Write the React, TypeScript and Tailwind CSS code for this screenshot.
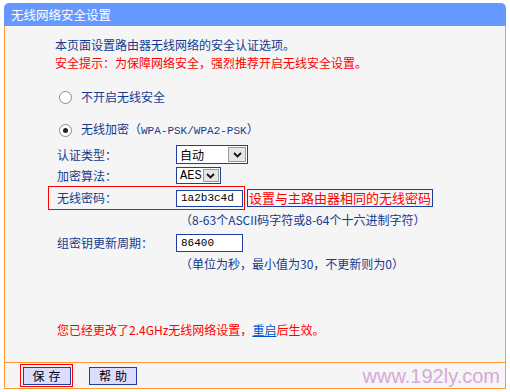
import React from 'react';

const FONT = { fontFamily: '"Noto Sans CJK SC", "Liberation Sans", sans-serif' };
const MONO = { fontFamily: '"Liberation Mono", "Noto Sans CJK SC", monospace' };

const Radio = ({ checked, label }: { checked?: boolean; label: React.ReactNode }) => (
  <div className="flex items-center h-[18px] pl-[54px]">
    <span className="w-[13px] h-[13px] rounded-full border border-[#8a8a8a] bg-white flex items-center justify-center">
      {checked && <span className="w-[5px] h-[5px] rounded-full bg-[#222]" />}
    </span>
    <span className="ml-[9px]">{label}</span>
  </div>
);

const Select = ({ value, width, mono }: { value: string; width: string; mono?: boolean }) => (
  <div className={`flex items-stretch border border-[#1f3fa0] bg-white h-full ${width}`}>
    <span className="flex-1 pl-[3px] text-black flex items-center text-[12px]" style={mono ? MONO : undefined}>
      {value}
    </span>
    <span className="w-[18px] m-[1px] bg-[#e6e6e6] border border-[#9a9a9a] flex items-center justify-center">
      <svg width="9" height="6" viewBox="0 0 9 6">
        <path d="M1 1 L4.5 4.5 L8 1" stroke="#111" strokeWidth="1.8" fill="none" />
      </svg>
    </span>
  </div>
);

const Input = ({ value }: { value: string }) => (
  <div
    className="w-[67px] h-full border border-[#1f3fa0] bg-white text-black flex items-center pl-[4px] text-[11px]"
    style={MONO}
  >
    {value}
  </div>
);

const App = () => {
  return (
    <div className="w-[510px] h-[392px] bg-white pt-[3px] text-[12px] leading-[18px] text-[#143a8f]" style={FONT}>
      <div className="ml-[4px] w-[502px]">
        <div className="h-[23px] bg-[#6699ff] rounded-t-[5px] text-white pl-[7px] flex items-center text-[12.5px]">
          无线网络安全设置
        </div>
        <div className="h-[336px] bg-[#f5f5f5] border-x border-[#ff9a2e] pt-[10px]">
          <div className="pl-[50px]">本页面设置路由器无线网络的安全认证选项。</div>
          <div className="pl-[50px] text-[#ff0000]">安全提示：为保障网络安全，强烈推荐开启无线安全设置。</div>
          <div className="mt-[16px]">
            <Radio label="不开启无线安全" />
          </div>
          <div className="mt-[15px]">
            <Radio
              checked
              label={
                <>
                  无线加密（<span className="text-[11px]" style={MONO}>WPA-PSK/WPA2-PSK</span>）
                </>
              }
            />
          </div>
          <div className="mt-[6px] flex items-center h-[19px]">
            <span className="pl-[52px] w-[171px]">认证类型：</span>
            <Select value="自动" width="w-[72px]" />
          </div>
          <div className="mt-[3px] flex items-center h-[17px]">
            <span className="pl-[52px] w-[171px]">加密算法：</span>
            <Select value="AES" width="w-[45px]" mono />
          </div>
          <div className="mt-[2px] flex items-center">
            <div className="ml-[43px] w-[197px] h-[24px] border border-[#ff0000] flex items-center">
              <span className="pl-[8px] w-[127px]">无线密码：</span>
              <div className="h-[17px]">
                <Input value="1a2b3c4d" />
              </div>
            </div>
            <div className="ml-[2px] h-[18px] border border-[#1f3fa0] text-[#ff0000] text-[13px] px-[1px] flex items-center">
              设置与主路由器相同的无线密码
            </div>
          </div>
          <div className="mt-[1px] pl-[175px]">（8-63个ASCII码字符或8-64个十六进制字符）</div>
          <div className="mt-[5px] flex items-center h-[18px]">
            <span className="pl-[52px] w-[171px]">组密钥更新周期：</span>
            <Input value="86400" />
          </div>
          <div className="mt-[3px] pl-[175px]">（单位为秒，最小值为30，不更新则为0）</div>
          <div className="mt-[48px] pl-[52px] text-[#ff0000]">
            您已经更改了2.4GHz无线网络设置，
            <span className="text-[#0055cc] underline">重启</span>
            后生效。
          </div>
        </div>
        <div className="relative h-[27px] bg-[#f5f5f5] border border-[#ff9a2e] flex items-center">
          <div className="ml-[15px] w-[53px] h-[23px] border border-[#ff0000] flex items-center justify-center">
            <button className="w-[48px] h-[18px] bg-[#dcdcff] border border-[#1f3fa0] text-black text-[12px] leading-none tracking-[4px] pl-[4px]">
              保存
            </button>
          </div>
          <button className="ml-[16px] w-[48px] h-[18px] bg-[#dcdcff] border border-[#1f3fa0] text-black text-[12px] leading-none tracking-[4px] pl-[4px]">
            帮助
          </button>
          <span
            className="absolute right-[5px] top-[1px] text-[20px] leading-[24px] text-[#d7a9d8]"
            style={{ fontFamily: '"Liberation Sans", Arial, sans-serif' }}
          >
            www.192ly.com
          </span>
        </div>
      </div>
    </div>
  );
};

export default App;
